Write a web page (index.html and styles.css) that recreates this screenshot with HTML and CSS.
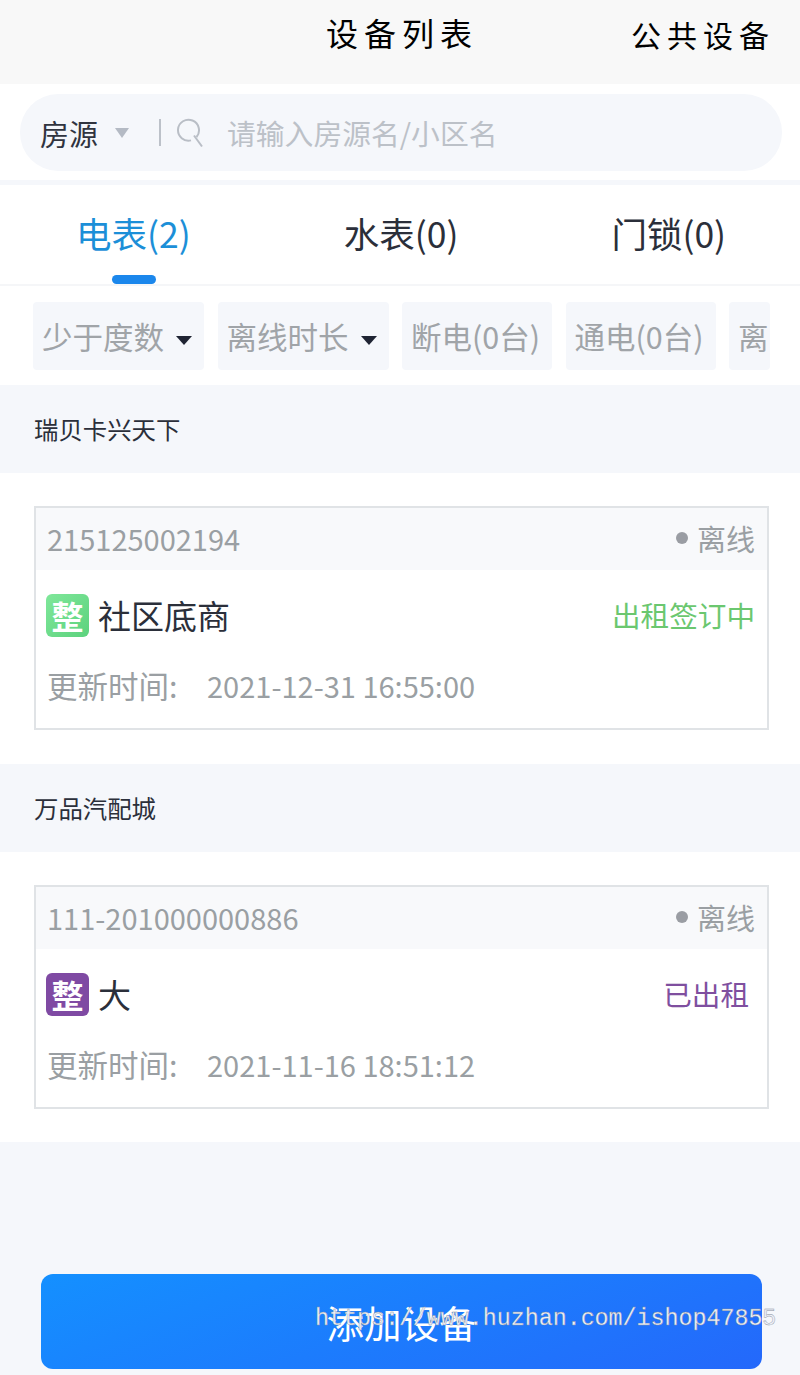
FILE: index.html
```html
<!DOCTYPE html>
<html lang="zh-CN">
<head>
<meta charset="utf-8">
<title>设备列表</title>
<link rel="stylesheet" href="styles.css">
</head>
<body>
<div class="page">
  <header class="topbar">
    <h1 class="title">设备列表</h1>
    <a class="public">公共设备</a>
  </header>
  <section class="search-wrap">
    <div class="search">
      <span class="source">房源</span>
      <svg class="caret-light" width="14" height="10" viewBox="0 0 14 10"><path d="M0 0h14L7 10z" fill="#b4bac4"/></svg>
      <span class="divider"></span>
      <svg class="search-icon" width="28" height="30" viewBox="0 0 28 30" fill="none" stroke="#b9bec6" stroke-width="2"><path d="M15 22.4A10.5 10.5 0 1 1 20.5 19"/><path d="M18 17.5l8 11"/></svg>
      <span class="placeholder">请输入房源名/小区名</span>
    </div>
  </section>
  <nav class="tabs">
    <div class="tab active">电表(2)<i class="underline"></i></div>
    <div class="tab">水表(0)</div>
    <div class="tab">门锁(0)</div>
  </nav>
  <div class="filters">
    <div class="chip chip-a">少于度数<svg class="caret" width="16" height="9" viewBox="0 0 16 9"><path d="M0 0h16L8 9z" fill="#1f2433"/></svg></div>
    <div class="chip chip-a">离线时长<svg class="caret" width="16" height="9" viewBox="0 0 16 9"><path d="M0 0h16L8 9z" fill="#1f2433"/></svg></div>
    <div class="chip chip-b">断电(0台)</div>
    <div class="chip chip-b">通电(0台)</div>
    <div class="chip chip-c">离</div>
  </div>

  <div class="group-title">瑞贝卡兴天下</div>
  <section class="group">
    <article class="card">
      <div class="card-head"><span class="code">215125002194</span><span class="state"><i class="dot"></i>离线</span></div>
      <div class="card-main">
        <span class="badge badge-green">整</span>
        <span class="name">社区底商</span>
        <span class="status status-green">出租签订中</span>
      </div>
      <div class="card-time"><span class="time-label">更新时间:</span><span>2021-12-31 16:55:00</span></div>
    </article>
  </section>

  <div class="group-title">万品汽配城</div>
  <section class="group group-last">
    <article class="card">
      <div class="card-head"><span class="code">111-201000000886</span><span class="state"><i class="dot"></i>离线</span></div>
      <div class="card-main">
        <span class="badge badge-purple">整</span>
        <span class="name">大</span>
        <span class="status status-purple">已出租</span>
      </div>
      <div class="card-time"><span class="time-label">更新时间:</span><span>2021-11-16 18:51:12</span></div>
    </article>
  </section>

  <div class="footer">
    <button class="add">添加设备</button>
  </div>
  <div class="watermark">https://www.huzhan.com/ishop47855</div>
</div>
</body>
</html>
```
FILE: styles.css
```css
* { box-sizing: border-box; margin: 0; padding: 0; }
html, body { height: 100%; }
body {
  background: #f5f7fb;
  font-family: "Noto Sans CJK SC", "Noto Sans", sans-serif;
  color: #2b2f3a;
  overflow: hidden;
}
.page { position: relative; width: 800px; height: 1375px; overflow: hidden; }

.topbar {
  height: 84px;
  background: #f8f8f8;
  display: flex;
  align-items: flex-start;
  padding-top: 12px;
  color: #000;
}
.title {
  margin-left: 326px;
  font-size: 32px;
  font-weight: 400;
  letter-spacing: 6px;
  line-height: 40px;
}
.public {
  margin-left: 153px;
  font-size: 30px;
  letter-spacing: 6px;
  line-height: 40px;
  margin-top: 2px;
}

.search-wrap { height: 96px; background: #fff; padding: 10px 18px 0 20px; }
.search {
  height: 77px;
  border-radius: 38px;
  background: #f5f7fb;
  display: flex;
  align-items: center;
  padding-left: 20px;
}
.source { font-size: 29px; color: #30343f; line-height: 40px; }
.caret-light { margin-left: 17px; }
.divider { width: 2px; height: 27px; background: #bcc1c9; margin-left: 30px; }
.search-icon { margin-left: 15px; }
.placeholder { margin-left: 23px; font-size: 28.8px; color: #bcc1c8; line-height: 40px; }

.tabs {
  margin-top: 5px;
  height: 101px;
  background: #fff;
  border-bottom: 2px solid #f5f6f8;
  display: flex;
  padding-top: 23px;
}
.tab {
  position: relative;
  font-size: 35.5px;
  line-height: 50px;
  color: #2b2f3a;
  text-align: center;
  white-space: nowrap;
}
.tab:nth-child(1) { margin-left: 76px; }
.tab:nth-child(2) { margin-left: 153px; }
.tab:nth-child(3) { margin-left: 153px; }
.tab.active { color: #1c8fd8; }
.underline {
  position: absolute;
  left: 36px;
  top: 67px;
  width: 44px;
  height: 9px;
  border-radius: 5px;
  background: #1b87ec;
}

.filters {
  height: 99px;
  background: #fff;
  display: flex;
  gap: 13.5px;
  padding: 16px 0 15px 33px;
}
.chip {
  flex: none;
  height: 68px;
  background: #f5f7fb;
  border-radius: 4px;
  padding: 0 9px;
  display: flex;
  align-items: center;
  font-size: 30.5px;
  color: #a0a4a8;
  white-space: nowrap;
}
.chip-a { width: 171px; }
.chip-b { width: 150px; }
.chip-c { width: 41px; overflow: hidden; padding: 0 0 0 9px; }
.caret { margin-left: 12px; margin-top: 8px; flex: none; }

.group-title {
  height: 88px;
  background: #f5f7fb;
  padding-left: 34px;
  font-size: 24.4px;
  line-height: 88px;
  color: #2b2f3a;
}
.group { background: #fff; padding: 33px 31px 34px 34px; height: 291px; }
.group-last { height: 290px; }

.card { height: 224px; border: 2px solid #e0e3e6; background: #fff; }
.card-head {
  height: 62px;
  background: #f8f9fb;
  display: flex;
  justify-content: space-between;
  align-items: center;
  padding: 0 12px 2px 11px;
  font-size: 29px;
  color: #9a9fa3;
}
.code { line-height: 40px; }
.state { display: flex; align-items: center; }
.dot { width: 12px; height: 12px; border-radius: 50%; background: #9a9da3; margin-right: 9px; margin-left: 2px; }
.card-main {
  height: 92px;
  display: flex;
  align-items: center;
  padding: 0 12px 2px 10px;
}
.badge {
  width: 43px;
  height: 43px;
  border-radius: 6px;
  color: #fff;
  font-size: 32px;
  font-weight: 700;
  line-height: 42px;
  text-align: center;
}
.badge-green { background: linear-gradient(135deg, #7fe79a, #5cd27d); }
.badge-purple { background: #7f4aa3; }
.name { margin-left: 9px; font-size: 33px; color: #2b2f3a; line-height: 44px; }
.status { margin-left: auto; font-size: 28.6px; line-height: 40px; }
.status-green { color: #6bc76f; }
.status-purple { color: #7f4f9f; margin-right: 6px; }
.card-time {
  display: flex;
  align-items: baseline;
  padding-left: 11px;
  font-size: 29px;
  line-height: 44px;
  color: #9a9fa3;
  margin-top: 1px;
}
.time-label { width: 160px; font-size: 30.5px; }

.footer { padding: 132px 38px 0 41px; }
.add {
  display: block;
  width: 721px;
  height: 95px;
  border: 0;
  border-radius: 12px;
  background: linear-gradient(160deg, #1490ff, #2468fb);
  color: #fff;
  font-family: inherit;
  font-size: 37.5px;
  line-height: 95px;
}
.watermark {
  position: absolute;
  left: 315px;
  top: 1304px;
  font-family: "Liberation Mono", monospace;
  font-size: 23.3px;
  line-height: 30px;
  color: #eef2fa;
  -webkit-text-stroke: 0.4px #8a8f9c;
  white-space: nowrap;
}
```
